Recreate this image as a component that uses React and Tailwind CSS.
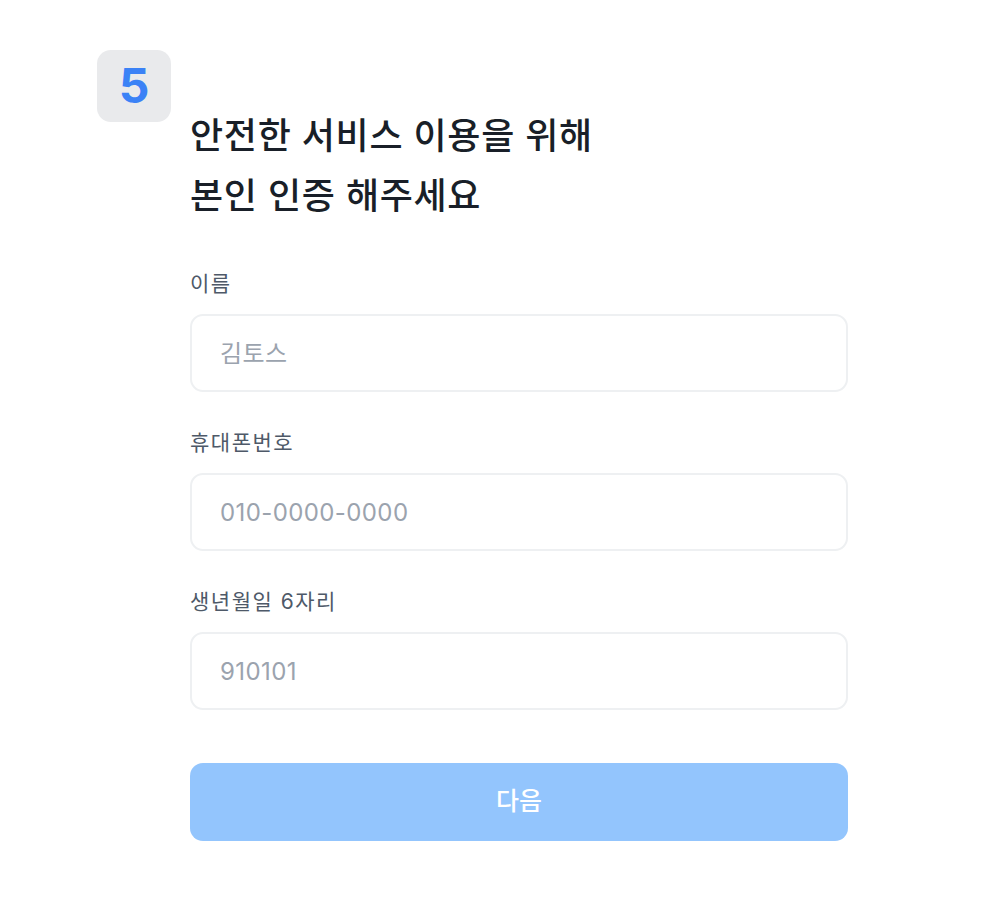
const fields = [
  { label: "이름", placeholder: "김토스" },
  { label: "휴대폰번호", placeholder: "010-0000-0000" },
  { label: "생년월일 6자리", placeholder: "910101" },
];

export default function App() {
  return (
    <div
      className="min-h-[920px] w-full bg-white pt-[50px]"
      style={{ fontFamily: "Inter, 'Noto Sans CJK KR', sans-serif" }}
    >
      {/* step badge */}
      <div className="ml-[97px] flex h-[72px] w-[74px] items-center justify-center rounded-[14px] bg-[#e9eaec]">
        <span className="text-[48px] font-bold leading-none text-[#3b82f6]">5</span>
      </div>

      <div className="ml-[190px] mt-[-16px] w-[658px]">
        <h1 className="text-[36px] font-medium leading-[60px] tracking-[0.7px] text-[#191f28]">
          안전한 서비스 이용을 위해
          <br />
          본인 인증 해주세요
        </h1>

        <div className="mt-[44px] flex flex-col gap-[37px]">
          {fields.map((f) => (
            <div key={f.label} className="flex flex-col gap-[16px]">
              <label className="text-[21px] leading-[28px] tracking-[1.5px] text-[#4e5968]">{f.label}</label>
              <input
                type="text"
                placeholder={f.placeholder}
                className="h-[78px] w-full rounded-[13px] border-2 border-[#eef0f2] bg-white px-[28px] text-[24px] tracking-[0.4px] text-[#191f28] outline-none placeholder:text-[#9ba3ae]"
              />
            </div>
          ))}
        </div>

        <button className="mt-[53px] flex h-[78px] w-full items-center justify-center rounded-[13px] bg-[#93c5fd] text-[25px] font-medium text-white">
          다음
        </button>
      </div>
    </div>
  );
}
